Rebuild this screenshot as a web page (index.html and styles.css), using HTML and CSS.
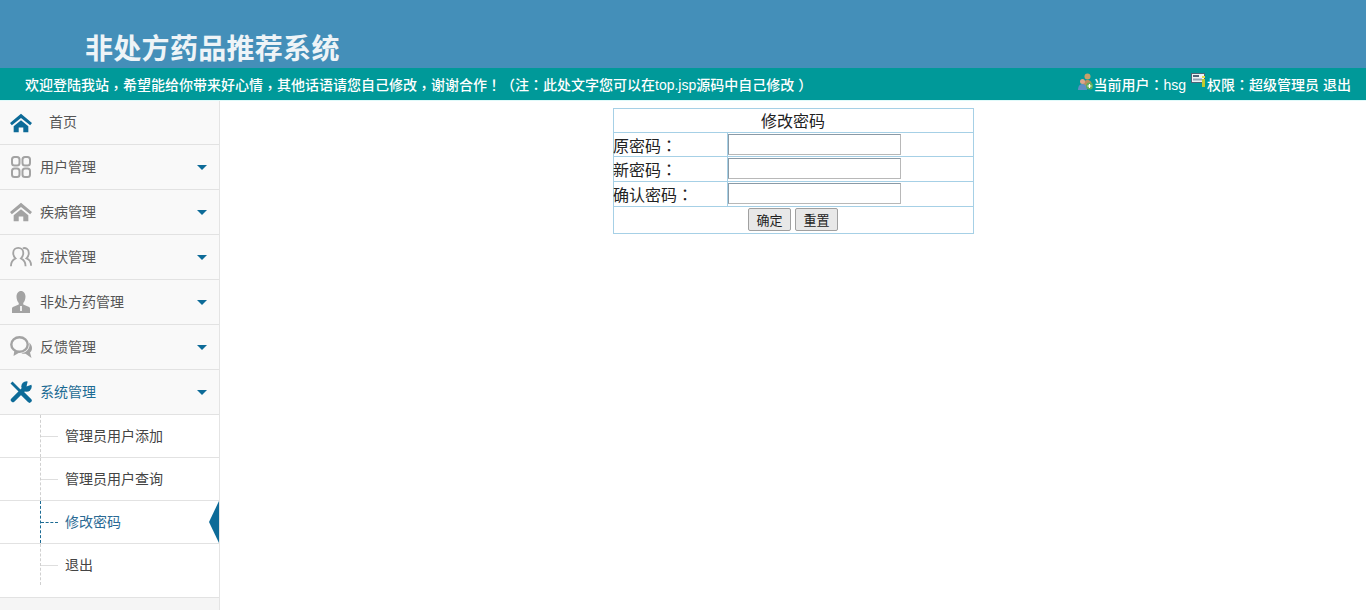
FILE: index.html
```html
<!DOCTYPE html>
<html>

<head>
	<meta charset="UTF-8">
	<title>非处方药品推荐系统</title>
	<link rel="stylesheet" href="styles.css">
</head>

<body>
	<div class="header">
		<h1 class="site-title">非处方药品推荐系统</h1>
	</div>

	<div class="topbar">
		<p class="welcome">欢迎登陆我站<span class="mark comma">，</span>希望能给你带来好心情<span class="mark comma">，</span>其他话语请您自己修改<span class="mark comma">，</span>谢谢合作<span class="mark">！（</span>注<span class="mark">：</span>此处文字您可以在top.jsp源码中自己修改<span class="mark closing">）</span></p>
		<div class="userinfo">
			<svg class="user-icon" viewBox="0 0 16 18" width="16" height="18">
				<circle cx="9.500" cy="3.500" r="3" fill="#c9a06a" />
				<path d="M5 13c0-4 2-6 4.500-6s4.500 2 4.500 6z" fill="#b98d5e" />
				<circle cx="4.500" cy="8.500" r="2.500" fill="#e0a58a" />
				<path d="M0 17c0-4 2-6 4.500-6s4.500 2 4.500 6z" fill="#5f8fc4" />
				<circle cx="11.500" cy="13" r="3.500" fill="#5fae5a" />
				<path d="M9.500 13h4M11.500 11v4" stroke="#fff" stroke-width="1.200" />
			</svg>
			<span>当前用户<span class="mark">：</span>hsg</span>
			<svg class="role-icon" viewBox="0 0 16 16" width="16" height="16">
				<rect x="0.500" y="0.500" width="13" height="9" fill="#eef3f6" stroke="#4d6478" />
				<rect x="2" y="2" width="6" height="2" fill="#4d6478" />
				<rect x="2" y="5.500" width="9" height="2" fill="#8fa5b5" />
				<rect x="11" y="3" width="3" height="2" fill="#e8e04a" />
				<rect x="11" y="6" width="3" height="8" fill="#c2c92e" />
			</svg>
			<span>权限<span class="mark">：</span>超级管理员 退出</span>
		</div>
	</div>

	<div class="page">
		<div class="sidebar">
			<ul class="menu">
				<li class="menu-item home">
					<svg class="menu-icon" viewBox="0 0 24 20" width="24" height="20">
						<path class="fill-blue" d="M12 0L0 10l2 2.500L12 4.500l10 8 2-2.500z" />
						<path class="fill-blue" d="M4 13.500L12 7l8 6.500V20h-5.500v-5h-5v5H4z" />
					</svg>
					<span>首页</span>
				</li>
				<li class="menu-item">
					<svg class="menu-icon" viewBox="0 0 22 22" width="22" height="22">
						<g fill="none" stroke="#a3a3a3" stroke-width="2">
							<rect x="2" y="1" width="7.500" height="8.500" rx="2.500" />
							<rect x="12.500" y="1" width="7.500" height="8.500" rx="2.500" />
							<rect x="2" y="12.500" width="7.500" height="8.500" rx="2.500" />
							<rect x="12.500" y="12.500" width="7.500" height="8.500" rx="2.500" />
						</g>
					</svg>
					<span>用户管理</span>
					<i class="caret"></i>
				</li>
				<li class="menu-item">
					<svg class="menu-icon" viewBox="0 0 24 20" width="24" height="20">
						<path class="fill-gray" d="M12 0L0 10l2 2.500L12 4.500l10 8 2-2.500z" />
						<path class="fill-gray" d="M4 13.500L12 7l8 6.500V20h-5.500v-5h-5v5H4z" />
					</svg>
					<span>疾病管理</span>
					<i class="caret"></i>
				</li>
				<li class="menu-item">
					<svg class="menu-icon" viewBox="0 0 24 22" width="24" height="22">
						<g fill="none" stroke="#a3a3a3" stroke-width="2">
							<path d="M1 21c0-5 2-7 5-8.500C4.500 11 3.500 9 3.500 6.500 3.500 3 6 1 9 1s5.500 2 5.500 5.500c0 2.500-1 4.500-2.500 6 3 1.500 5 3.500 5 8.500" />
							<path d="M14 1.500c3-1 6.500 1 6.500 5 0 2.500-1 4.500-2.500 6 3 1 5 3.500 5 8" />
						</g>
					</svg>
					<span>症状管理</span>
					<i class="caret"></i>
				</li>
				<li class="menu-item">
					<svg class="menu-icon" viewBox="0 0 20 22" width="20" height="22">
						<g transform="translate(1 0) scale(.9 1)">
							<path class="fill-gray" d="M10 0c3 0 5 2.500 5 5.500 0 2.500-1 5-2.500 6.500v1.500L19 16c1 .5 1 1.500 1 2.500V22H0v-3.500c0-1 0-2 1-2.500l6.500-2.500V12C6 10.500 5 8 5 5.500 5 2.500 7 0 10 0z" />
							<path d="M9 15h2v5H9z" fill="#f7f7f7" />
						</g>
					</svg>
					<span>非处方药管理</span>
					<i class="caret"></i>
				</li>
				<li class="menu-item">
					<svg class="menu-icon" viewBox="0 0 22 22" width="22" height="22">
						<path class="fill-gray" d="M18.500 6c2 1.500 3.500 3.500 3.500 6 0 2-.8 3.500-2 4.500l1.500 5.500-6-4.200c-1.500.2-3 0-4.200-.8 4 0 8.200-3.500 8.200-8 0-1-.2-2-.5-3z" />
						<ellipse cx="9.500" cy="8.500" rx="8.200" ry="7.300" fill="none" stroke="#a3a3a3" stroke-width="2.400" />
						<path class="fill-gray" d="M4.500 14l-1 6 6-3.500z" />
					</svg>
					<span>反馈管理</span>
					<i class="caret"></i>
				</li>
				<li class="menu-item active">
					<svg class="menu-icon" viewBox="0 0 22 22" width="22" height="22">
						<path d="M1.500 1.500L11 11" stroke="#0d6b98" stroke-width="2.800" />
						<path d="M12.500 12.500L19.500 19.500" stroke="#0d6b98" stroke-width="4.500" stroke-linecap="round" />
						<path d="M3 19L14 8" stroke="#0d6b98" stroke-width="4.500" stroke-linecap="round" />
						<circle class="fill-blue" cx="16.500" cy="5.500" r="5.200" />
						<path d="M16.500 5.500L18 -1 23.500 -1 23.500 3z" fill="#f9f9f9" />
					</svg>
					<span>系统管理</span>
					<i class="caret"></i>
				</li>
			</ul>

			<ul class="submenu">
				<li class="sub-item"><span>管理员用户添加</span></li>
				<li class="sub-item"><span>管理员用户查询</span></li>
				<li class="sub-item current"><span>修改密码</span></li>
				<li class="sub-item"><span>退出</span></li>
			</ul>
		</div>

		<div class="main">
			<form class="pwd-form">
				<div class="form-title">修改密码</div>
				<div class="form-row">
					<label class="form-label" for="oldpwd">原密码<span class="mark">：</span></label>
					<input class="form-input" type="password" id="oldpwd">
				</div>
				<div class="form-row">
					<label class="form-label" for="newpwd">新密码<span class="mark">：</span></label>
					<input class="form-input" type="password" id="newpwd">
				</div>
				<div class="form-row">
					<label class="form-label" for="repwd">确认密码<span class="mark">：</span></label>
					<input class="form-input" type="password" id="repwd">
				</div>
				<div class="button-row">
					<button type="submit">确定</button>
					<button type="reset">重置</button>
				</div>
			</form>
		</div>
	</div>
</body>

</html>
```

FILE: styles.css
```css
* {
	box-sizing: border-box;
}

html,
body {
	height: 100%;
}

body {
	margin: 0;
	background-color: white;
	color: #333;
	font-family: "Liberation Sans", "Noto Sans CJK SC", sans-serif;
	overflow: hidden;
}

/* centered full-width punctuation */
.mark {
	font-family: "Noto Sans CJK TC", sans-serif;
}

.comma {
	vertical-align: -3px;
	line-height: 0;
}

.closing {
	margin-left: 4px;
}

.header {
	height: 68px;
	background-color: #448fb9;
	padding-left: 85px;
	display: flex;
	align-items: flex-end;
}

.site-title {
	margin: 0;
	color: #eef4f7;
	font-size: 28px;
	line-height: 36px;
	font-weight: bold;
	letter-spacing: 0.3px;
	font-family: "Liberation Serif", "Noto Sans CJK SC", serif;
}

.topbar {
	height: 32px;
	background-color: #009999;
	color: white;
	padding: 0 15px 0 25px;
	display: flex;
	justify-content: space-between;
	align-items: center;
	font-size: 14px;
	font-weight: 500;
}

.welcome {
	margin: 0;
}

.userinfo {
	display: flex;
	align-items: center;
}

.user-icon {
	margin-top: -4px;
}

.role-icon {
	margin: -6px 0 0 5px;
}

.page {
	display: flex;
	height: 510px;
	border-top: 1px solid #dffafa;
}

.sidebar {
	width: 220px;
	flex-shrink: 0;
	background-color: #f5f5f5;
	border-right: 1px solid #e4e4e4;
}

.menu,
.submenu {
	list-style: none;
	margin: 0;
	padding: 0;
}

.menu-item {
	height: 45px;
	background-color: #f9f9f9;
	border-bottom: 1px solid #e2e2e2;
	display: flex;
	align-items: center;
	padding: 0 12px 0 10px;
	font-size: 14px;
	color: #555;
}

.home {
	height: 44px;
}

.menu-item span {
	margin-left: 8px;
	margin-top: -2px;
}

.menu-icon {
	width: 22px;
	flex-shrink: 0;
}

.home span {
	margin-left: 17px;
	margin-top: -4px;
}

.fill-blue {
	fill: #0d6b98;
}

.fill-gray {
	fill: #a3a3a3;
}

.caret {
	margin-left: auto;
	border-style: solid;
	border-width: 5px 5px 0;
	border-color: #0d6b98 transparent transparent;
}

.active span {
	color: #1c6b94;
}

.submenu {
	background-color: white;
	padding-bottom: 10px;
	border-bottom: 1px solid #e2e2e2;
}

.sub-item {
	position: relative;
	height: 43px;
	border-bottom: 1px solid #e2e2e2;
	padding: 0 0 2px 65px;
	display: flex;
	align-items: center;
	font-size: 14px;
	color: #444;
}

.sub-item:last-child {
	border-bottom: none;
	padding-bottom: 4px;
}

/* dashed tree lines */
.sub-item::before {
	content: "";
	position: absolute;
	left: 40px;
	top: 0;
	bottom: 0;
	border-left: 1px dashed #d0d0d0;
}

.sub-item:last-child::before {
	bottom: 2px;
}

.sub-item::after {
	content: "";
	position: absolute;
	left: 41px;
	top: 21px;
	width: 17px;
	border-top: 1px solid #dedede;
}

.current {
	color: #2a6a94;
}

.current::before {
	border-color: #1c6b94;
}

.current::after {
	border-top: 1px dashed #1c6b94;
}

.current span::after {
	content: "";
	position: absolute;
	right: 0;
	top: 0;
	width: 10px;
	height: 42px;
	background-color: #0d6b98;
	clip-path: polygon(100% 0, 0 50%, 100% 100%);
}

.main {
	flex: 1;
	padding-top: 7px;
	padding-left: 393px;
}

.pwd-form {
	width: 361px;
	height: 126px;
	border: 1px solid #a6d0e6;
	font-size: 16px;
	color: #222;
}

.form-title {
	height: 24px;
	line-height: 25px;
	padding-right: 1px;
	text-align: center;
	border-bottom: 1px solid #a6d0e6;
}

.form-row {
	height: 24px;
	display: flex;
	align-items: flex-start;
	border-bottom: 1px solid #a6d0e6;
}

.form-row:nth-child(3),
.form-row:nth-child(4) {
	height: 25px;
}

.form-label {
	width: 114px;
	height: 100%;
	border-right: 1px solid #a6d0e6;
	line-height: 25px;
	text-indent: -1px;
}

.form-input {
	width: 173px;
	height: 21px;
	margin: 1px 0 0;
	padding: 1px 2px;
	border: 1px solid #9a9a9a;
	border-color: #8a9aa6 #b8b8b8 #b8b8b8 #8a9aa6;
	background-color: white;
}

.button-row {
	display: flex;
	justify-content: center;
	gap: 4px;
	padding: 1px 1px 0 0;
}

button {
	width: 43px;
	height: 23px;
	padding: 0;
	font-size: 13px;
	font-family: inherit;
	color: #222;
	background-color: #e8e8e8;
	border: 1px solid #a0a0a0;
	border-radius: 2px;
}
```
